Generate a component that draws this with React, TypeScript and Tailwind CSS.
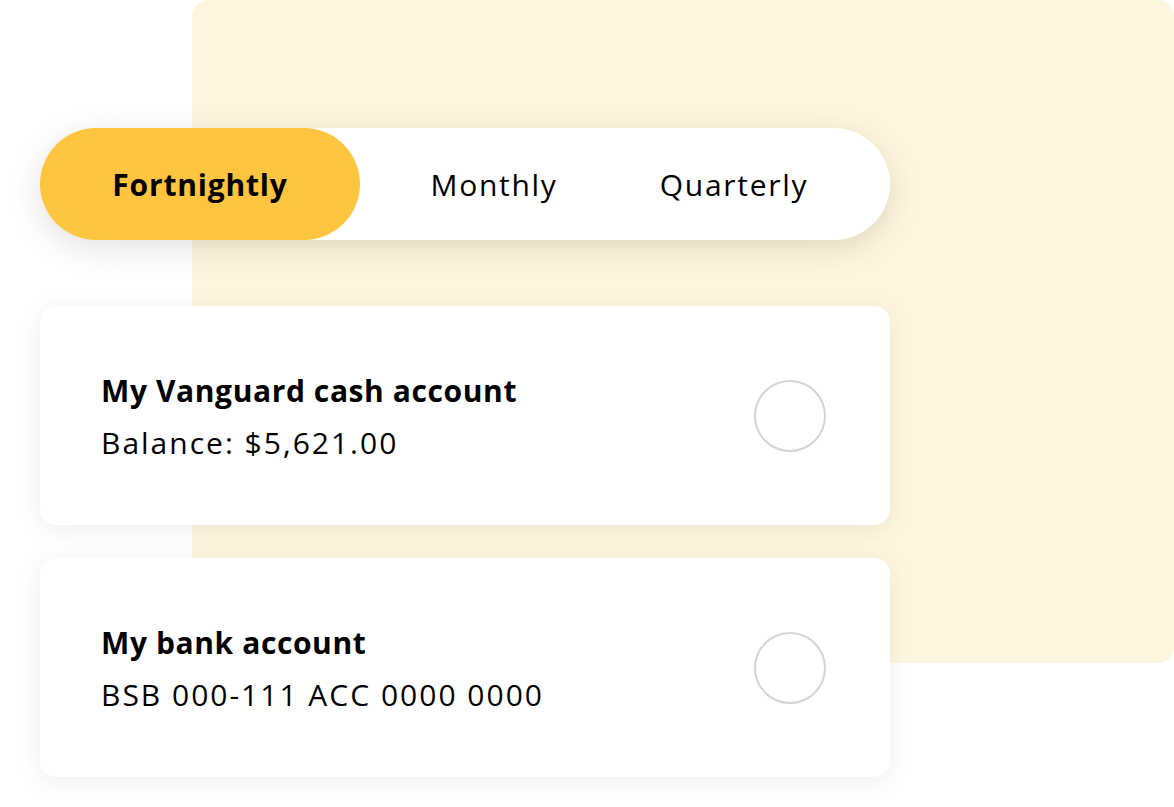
import React, { useState } from "react";

type Account = {
  id: string;
  name: string;
  detail: string;
};

const frequencies = [
  { label: "Fortnightly", width: "w-[320px]" },
  { label: "Monthly", width: "w-[268px]" },
  { label: "Quarterly", width: "w-[212px]" },
];

const accounts: Account[] = [
  { id: "cash", name: "My Vanguard cash account", detail: "Balance: $5,621.00" },
  { id: "bank", name: "My bank account", detail: "BSB 000-111 ACC 0000 0000" },
];

const AccountCard: React.FC<{
  account: Account;
  selected: boolean;
  onSelect: () => void;
}> = ({ account, selected, onSelect }) => (
  <div
    onClick={onSelect}
    className="flex h-[219px] w-[850px] cursor-pointer items-center justify-between rounded-[16px] bg-white pl-[61px] pr-[64px] shadow-[0_4px_24px_rgba(0,0,0,0.07)]"
  >
    <div className="flex flex-col gap-[14px] pt-[2px]">
      <div className="text-[30px] font-bold leading-[38px] tracking-[0.6px] text-black">
        {account.name}
      </div>
      <div className="text-[30px] leading-[38px] tracking-[2px] text-black">
        {account.detail}
      </div>
    </div>
    <div
      className={`h-[72px] w-[72px] rounded-full border-2 ${
        selected ? "border-[#ffc440] bg-[#ffc440]" : "border-[#d4d4d4] bg-white"
      }`}
    />
  </div>
);

const App: React.FC = () => {
  const [frequency, setFrequency] = useState("Fortnightly");
  const [selected, setSelected] = useState<string | null>(null);

  return (
    <div
      className="relative h-[807px] w-[1174px] overflow-hidden bg-white"
      style={{ fontFamily: "'Open Sans', 'Noto Sans', sans-serif" }}
    >
      {/* yellow backdrop behind the panel */}
      <div className="absolute left-[192px] top-0 h-[663px] w-[982px] rounded-[16px] bg-[#fef5de]" />

      <div className="relative flex flex-col pl-[40px] pt-[128px]">
        <div className="flex h-[112px] w-[850px] items-center rounded-full bg-white shadow-[0_8px_32px_rgba(0,0,0,0.12)]">
          {frequencies.map((f) => (
            <button
              key={f.label}
              onClick={() => setFrequency(f.label)}
              className={`flex h-full items-center justify-center rounded-full text-[30px] text-black ${f.width} ${
                frequency === f.label
                  ? "bg-[#ffc440] font-bold tracking-[0.8px]"
                  : "tracking-[1.7px]"
              }`}
            >
              {f.label}
            </button>
          ))}
        </div>

        <div className="mt-[66px] flex flex-col gap-[33px]">
          {accounts.map((a) => (
            <AccountCard
              key={a.id}
              account={a}
              selected={selected === a.id}
              onSelect={() => setSelected(a.id)}
            />
          ))}
        </div>
      </div>
    </div>
  );
};

export default App;
